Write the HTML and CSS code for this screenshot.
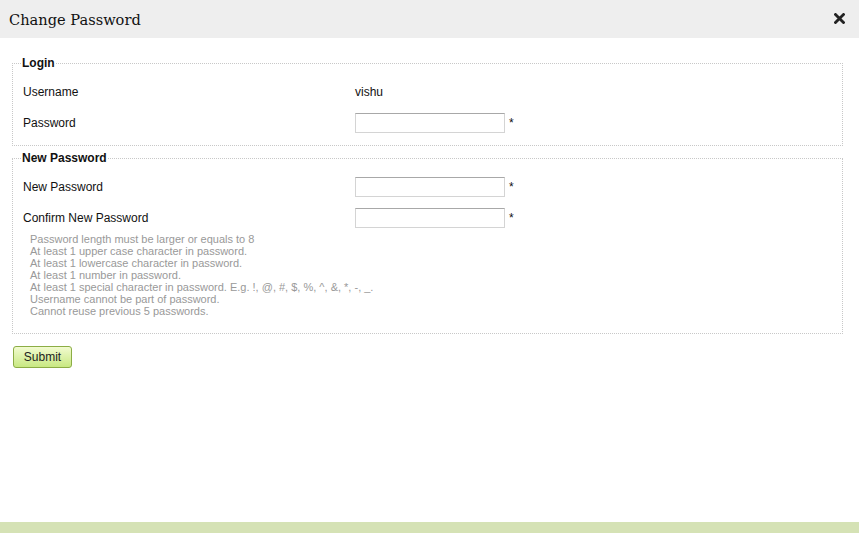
FILE: index.html
```html
<!DOCTYPE html>
<html>
<head>
<meta charset="utf-8">
<link rel="stylesheet" href="styles.css">
</head>
<body>
<div class="page">
  <div class="header">
    <span class="title">Change Password</span>
    <span class="close"><svg width="11" height="11" viewBox="0 0 11 11"><path d="M1.5 1.5 L9.5 9.5 M9.5 1.5 L1.5 9.5" stroke="#222" stroke-width="2.8" stroke-linecap="square"/></svg></span>
  </div>
  <div class="content">
    <fieldset class="group first">
      <legend>Login</legend>
      <div class="rows">
        <div class="label">Username</div><div class="value">vishu</div>
        <div class="label">Password</div><div class="value"><input type="password" class="field"><span class="req">*</span></div>
      </div>
    </fieldset>
    <fieldset class="group second">
      <legend>New Password</legend>
      <div class="rows">
        <div class="label">New Password</div><div class="value"><input type="password" class="field"><span class="req">*</span></div>
        <div class="label">Confirm New Password</div><div class="value"><input type="password" class="field"><span class="req">*</span></div>
      </div>
      <div class="hints">
        <div>Password length must be larger or equals to 8</div>
        <div>At least 1 upper case character in password.</div>
        <div>At least 1 lowercase character in password.</div>
        <div>At least 1 number in password.</div>
        <div>At least 1 special character in password. E.g. !, @, #, $, %, ^, &amp;, *, -, _.</div>
        <div>Username cannot be part of password.</div>
        <div>Cannot reuse previous 5 passwords.</div>
      </div>
    </fieldset>
    <button class="submit">Submit</button>
  </div>
  <div class="footer"></div>
</div>
</body>
</html>
```
FILE: styles.css
```css
html, body { margin: 0; padding: 0; }
body { font-family: "Liberation Sans", Arial, sans-serif; font-size: 12px; color: #111; background: #fff; }
.page { display: flex; flex-direction: column; height: 533px; }
.header { height: 38px; background: #eeeeee; display: flex; align-items: center; justify-content: space-between; padding: 0 14px 0 9px; }
.title { font-family: "DejaVu Serif", Georgia, serif; font-size: 14.6px; color: #111; }
.close { display: flex; align-items: center; margin-top: -1px; }
.content { flex: 1; padding: 18px 16px 0 12px; }
.group { border: 1px dotted #c8c8c8; margin: 0; padding: 0 10px; width: 809px; }
.group legend { font-weight: bold; font-size: 12px; padding: 0 1px; margin-left: -2px; line-height: 14px; }
.rows { display: grid; grid-template-columns: 332px 1fr; grid-auto-rows: 31px; align-items: center; }
.first { padding-top: 6px; padding-bottom: 7px; }
.second { margin-top: 5px; padding-top: 6px; padding-bottom: 16px; }
.value { display: flex; align-items: center; }
.field { width: 150px; height: 20px; box-sizing: border-box; border: 1px solid #d4d4d4; border-top-color: #a8a8a8; margin: 0; padding: 0 2px; background: #fff; }
.req { margin-left: 4px; font-size: 12px; }
.hints { padding-left: 7px; color: #999; font-size: 11px; line-height: 12px; margin-top: 0; }
.submit { margin-top: 12px; margin-left: 1px; width: 59px; height: 22px; border: 1px solid #8cad45; border-radius: 3px; background: linear-gradient(#f2fbd0, #c8e882); font-family: "Liberation Sans", Arial, sans-serif; font-size: 12px; color: #222; padding: 0; }
.footer { height: 11px; background: #d5e2b5; }
```
